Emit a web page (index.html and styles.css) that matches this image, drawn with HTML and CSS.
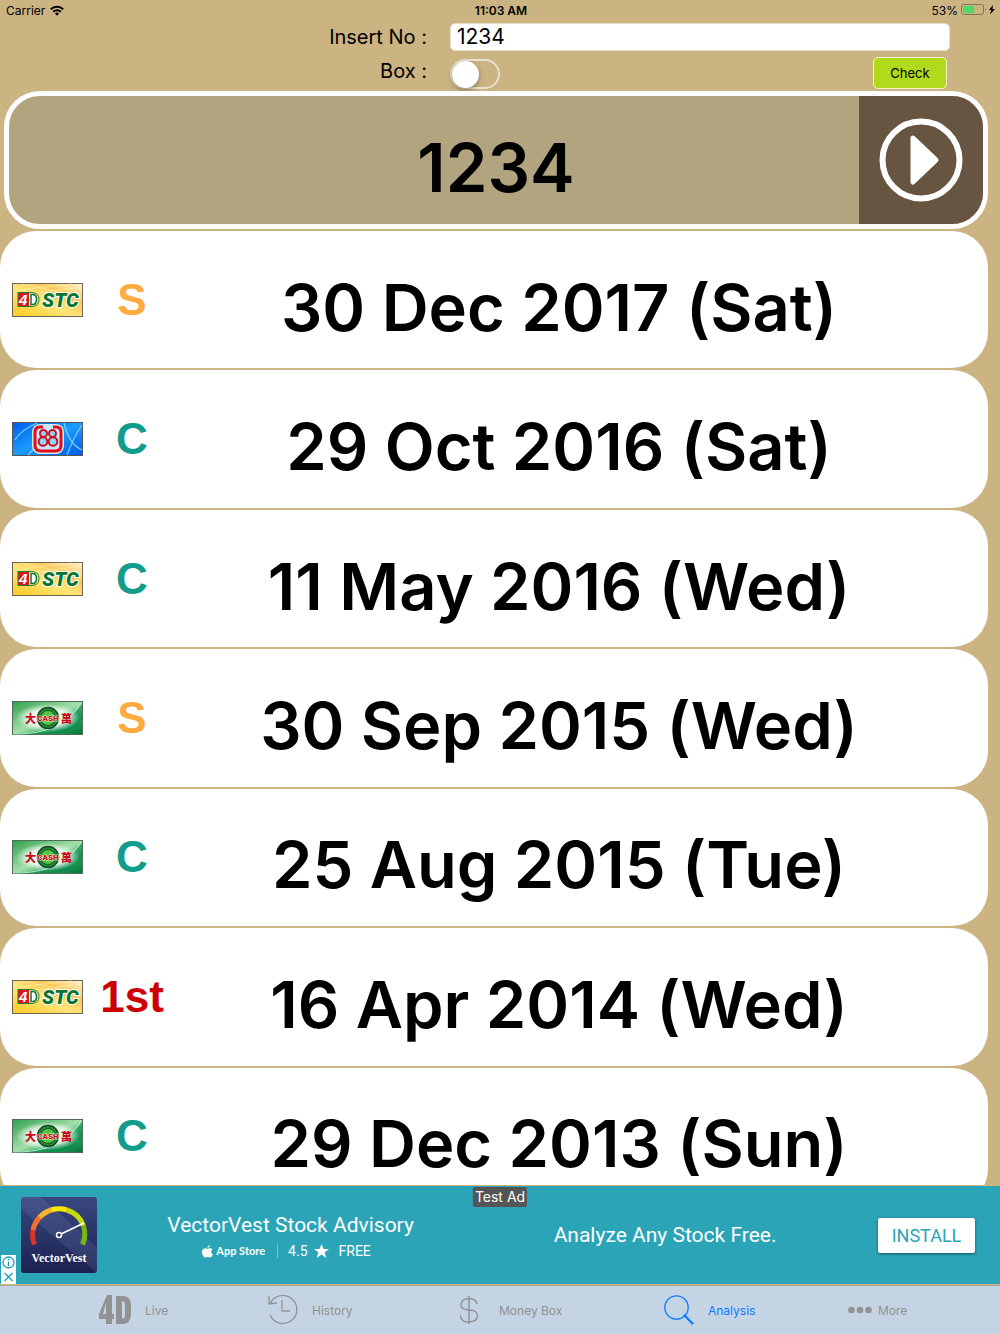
FILE: index.html
```html
<!DOCTYPE html>
<html lang="en">
<head>
<meta charset="utf-8">
<meta name="viewport" content="width=device-width, initial-scale=1">
<title>Analysis</title>
<link rel="stylesheet" href="styles.css">
</head>
<body>
<svg class="defs" aria-hidden="true">
  <defs>
    <linearGradient id="gold" x1="0" y1="1" x2="1" y2="0"><stop offset="0" stop-color="#ffc91f"/><stop offset=".45" stop-color="#ffe577"/><stop offset=".7" stop-color="#fbc95b"/><stop offset="1" stop-color="#fff3d6"/></linearGradient>
    <linearGradient id="blue" x1="0" y1="0" x2="1" y2="1"><stop offset="0" stop-color="#005be6"/><stop offset=".5" stop-color="#1a9cff"/><stop offset="1" stop-color="#0058ea"/></linearGradient>
    <linearGradient id="green" x1="0" y1="0" x2="1" y2="1"><stop offset="0" stop-color="#2fa04a"/><stop offset=".5" stop-color="#a5dfab"/><stop offset=".75" stop-color="#1da058"/><stop offset="1" stop-color="#07733b"/></linearGradient>
    <radialGradient id="glow"><stop offset="0" stop-color="#fff"/><stop offset=".6" stop-color="#fff" stop-opacity=".8"/><stop offset="1" stop-color="#fff" stop-opacity="0"/></radialGradient>
    <linearGradient id="navy" x1="0" y1="0" x2="0" y2="1"><stop offset="0" stop-color="#38477f"/><stop offset="1" stop-color="#1b2150"/></linearGradient>
  </defs>
</svg>

<header class="status">
  <div class="status-left"><span>Carrier</span>
    <svg width="14" height="11" viewBox="0 0 14 11" aria-hidden="true"><g fill="none" stroke="#000" stroke-width="2"><path d="M.8 4.200a8.800 8.800 0 0 1 12.400 0"/><path d="M3.200 6.800a5.400 5.400 0 0 1 7.600 0"/></g><path d="M7 10.700L4.900 8.600a3 3 0 0 1 4.200 0z"/></svg>
  </div>
  <time class="clock">11:03 AM</time>
  <div class="status-right"><span>53%</span>
    <svg width="35" height="12" viewBox="0 0 35 12" aria-hidden="true"><rect x=".5" y=".5" width="22" height="10" rx="2" fill="none" stroke="#84745a"/><rect x="2" y="2" width="11" height="7" fill="#4cd964"/><path d="M24 4v3.500q1.500-1.700 0-3.500" fill="#84745a"/><path d="M32 1l-4 5h2.300L29 10.500 34 5h-2.500z"/></svg>
  </div>
</header>

<form class="search">
  <label for="number">Insert No :</label>
  <input class="number" id="number" type="text" value="1234">
  <label for="box">Box :</label>
  <div class="search-actions">
    <input class="switch" id="box" type="checkbox" role="switch">
    <button class="check" type="button">Check</button>
  </div>
</form>

<main class="results">
  <section class="summary">
    <h1>1234</h1>
    <button class="play" type="button" aria-label="Play"><svg viewBox="0 0 84 84" width="84" height="84"><circle cx="42" cy="42" r="38.500" fill="none" stroke="#fff" stroke-width="6"/><path d="M34 20L57 42 34 64z" fill="#fff" stroke="#fff" stroke-width="5" stroke-linejoin="round"/></svg></button>
  </section>
  <ul class="draws">
    <li class="draw">
      <svg class="logo" viewBox="0 0 71 34" role="img" aria-label="4D STC">
        <g id="stc">
          <rect x=".5" y=".5" width="70" height="33" fill="url(#gold)" stroke="#6b6655"/>
          <path d="M1 8Q30 4 60 1M1 13Q40 8 70 4M10 1L70 14" stroke="#fff3b0" stroke-width=".8" fill="none" opacity=".7"/>
          <path d="M6 10h11v13H6z" fill="#e3131b"/><path d="M6 9.500h13q8 0 8 7t-8 7H6z" fill="none" stroke="#18803a" stroke-width="1"/>
          <path d="M17 10.500h2.500q6 0 6 6t-6 6H17z" fill="#fff"/>
          <path d="M19 11.500h1.500q4 0 4 5t-4 5H19z" fill="none" stroke="#0a7434" stroke-width="1.500"/>
          <text x="7" y="22" font-family="Liberation Sans, sans-serif" font-weight="700" font-style="italic" font-size="15" fill="#fff">4</text>
          <text x="30" y="24" font-family="Roboto, sans-serif" font-weight="900" font-style="italic" font-size="20" fill="#08742f" stroke="#fff" stroke-width="2" paint-order="stroke">STC</text>
        </g>
      </svg>
      <span class="grade special">S</span><span class="date">30 Dec 2017 (Sat)</span>
    </li>
    <li class="draw">
      <svg class="logo" viewBox="0 0 71 34" role="img" aria-label="88">
        <rect x=".5" y=".5" width="70" height="33" fill="url(#blue)" stroke="#555"/>
        <path d="M3 18Q9 8 25 1M52 1Q57 22 70 28M55 33Q62 14 70 3M16 33L34 14" stroke="#9be2ff" stroke-width="1.200" fill="none" opacity=".8"/>
        <rect x="20" y="2" width="32" height="30" rx="8" fill="#dff2ff" opacity=".9"/>
        <path d="M31 5h-3q-5 0-5 5v13q0 6 6 6h14q6 0 6-6V10q0-5-5-5h-3" fill="none" stroke="#e40b12" stroke-width="3"/>
        <g fill="#8ed6ff" stroke="#cf1118" stroke-width="2"><circle cx="31.500" cy="11.500" r="3.500"/><circle cx="31" cy="19.500" r="4.300"/><circle cx="40.500" cy="11.500" r="3.500"/><circle cx="41" cy="19.500" r="4.300"/></g>
      </svg>
      <span class="grade consolation">C</span><span class="date">29 Oct 2016 (Sat)</span>
    </li>
    <li class="draw"><svg class="logo" viewBox="0 0 71 34" role="img" aria-label="4D STC"><use href="#stc"/></svg><span class="grade consolation">C</span><span class="date">11 May 2016 (Wed)</span></li>
    <li class="draw">
      <svg class="logo" viewBox="0 0 71 34" role="img" aria-label="Cash">
        <g id="cash">
          <rect x=".5" y=".5" width="70" height="33" fill="url(#green)" stroke="#526b57"/>
          <path d="M1 33Q50 32 70 3V18Q60 32 40 33z" fill="#07864a" opacity=".6"/><path d="M1 33Q50 34 69 2" fill="none" stroke="#abecc7"/>
          <ellipse cx="36" cy="17" rx="32" ry="14" fill="url(#glow)"/>
          <circle cx="36" cy="17" r="10.500" fill="#218b31" stroke="#174923" stroke-width="1.500"/><circle cx="36" cy="17" r="7.500" fill="#54c44b" stroke="#0d5b20"/>
          <g font-family="Noto Sans CJK TC, sans-serif" font-weight="900" font-size="11" fill="#c9101a"><text x="13" y="22">大</text><text x="49" y="22">萬</text></g>
          <text x="36" y="20" text-anchor="middle" font-family="Roboto, sans-serif" font-weight="900" font-size="8" fill="#c9101a" stroke="#f8e9d0" stroke-width="1" paint-order="stroke">CASH</text>
        </g>
      </svg>
      <span class="grade special">S</span><span class="date">30 Sep 2015 (Wed)</span>
    </li>
    <li class="draw"><svg class="logo" viewBox="0 0 71 34" role="img" aria-label="Cash"><use href="#cash"/></svg><span class="grade consolation">C</span><span class="date">25 Aug 2015 (Tue)</span></li>
    <li class="draw"><svg class="logo" viewBox="0 0 71 34" role="img" aria-label="4D STC"><use href="#stc"/></svg><span class="grade first">1st</span><span class="date">16 Apr 2014 (Wed)</span></li>
    <li class="draw"><svg class="logo" viewBox="0 0 71 34" role="img" aria-label="Cash"><use href="#cash"/></svg><span class="grade consolation">C</span><span class="date">29 Dec 2013 (Sun)</span></li>
  </ul>
</main>

<aside class="ad">
  <svg class="ad-logo" viewBox="0 0 76 76" width="76" height="76" role="img" aria-label="VectorVest">
    <rect width="76" height="76" rx="3" fill="url(#navy)"/><path d="M0 0h20l56 50v26L0 12z" fill="#7886b8" opacity=".2"/>
    <g fill="none" stroke-width="5"><path d="M13.500 47.500A26 26 0 0 1 12 33" stroke="#d6332c"/><path d="M12 33A26 26 0 0 1 18.500 20.500" stroke="#f4702a"/><path d="M18.500 20.500A26 26 0 0 1 30 13" stroke="#fab32c"/><path d="M30 13A26 26 0 0 1 46 13" stroke="#ffe600"/><path d="M46 13A26 26 0 0 1 62.500 29" stroke="#c4dc0d"/><path d="M62.500 29A26 26 0 0 1 61.500 47.500" stroke="#76b80c"/></g>
    <path d="M38 38L63 26" stroke="#fff" stroke-width="1.500"/><circle cx="38" cy="38" r="2.500" fill="#27305f" stroke="#fff" stroke-width="1.500"/>
    <text x="38" y="65" text-anchor="middle" font-family="Liberation Serif, serif" font-weight="700" font-size="12" fill="#fff">VectorVest</text>
  </svg>
  <div class="ad-copy">
    <p class="ad-title">VectorVest Stock Advisory</p>
    <p class="ad-meta">
      <svg width="11" height="13" viewBox="0 0 11 13" aria-hidden="true"><path fill="#fff" d="M7.700 0Q7.900 2.500 5.400 3 5.300.8 7.700 0M5.500 4C6.300 4 7 3.300 8.200 3.300q1.500.1 2.300 1.200c-2 1.200-1.700 3.900.5 4.600C10.300 11 9.200 12.600 8 12.600c-.9 0-1.300-.5-2.300-.5s-1.400.5-2.300.5C1.800 12.600 0 9.800 0 7.300c0-2.600 1.600-4 3.200-4C4.200 3.300 4.900 4 5.500 4"/></svg>
      <span class="store">App Store</span><span class="rating">4.5</span>
      <svg width="15" height="14" viewBox="0 0 15 14" aria-hidden="true"><path fill="#fff" d="M7.500 0l2 5H15l-4.300 3.300L12.300 14 7.500 10.600 2.700 14l1.600-5.700L0 5h5.500z"/></svg>
      <span class="price">FREE</span>
    </p>
  </div>
  <p class="ad-tagline">Analyze Any Stock Free.</p>
  <button class="install" type="button">INSTALL</button>
  <span class="test-badge">Test Ad</span>
  <svg class="ad-choices" width="15" height="29" viewBox="0 0 15 29" role="img" aria-label="Ad options"><path fill="#fff" d="M0 0h15v29H0z"/><g fill="none" stroke="#16a0bb" stroke-width="1.300"><circle cx="7.500" cy="7.500" r="5.500"/><path d="M7.500 6.500v4.500M7.500 4v1.300M3.500 18l8 8M11.500 18l-8 8"/></g></svg>
</aside>

<nav class="tabs">
  <a href="#live"><svg width="32" height="30" viewBox="0 0 32 30" aria-hidden="true"><path fill="#929292" fill-rule="evenodd" d="M8 0h5v19h2v5h-2v5H7v-5H0v-5zM7 8L4 19h3zM17 1h6q9 0 9 9v9q0 10-9 10h-6zm6 5v18q3 0 3-4V10q0-4-3-4"/></svg>Live</a>
  <a href="#history"><svg width="30" height="30" viewBox="0 0 30 30" fill="none" stroke="#929292" stroke-width="1.300" aria-hidden="true"><path d="M2 9A14 14 0 1 1 2 20M1 1v8l8-1M14 5v11h8"/></svg>History</a>
  <a href="#money"><svg width="26" height="30" viewBox="0 0 26 30" fill="none" stroke="#929292" stroke-width="1.500" aria-hidden="true"><path d="M10 1v28M18 9Q17 3.500 10 3.500T2 9t8 6 8.500 6-8.500 6-8.500-6.500"/></svg>Money Box</a>
  <a class="current" href="#analysis" aria-current="page"><svg width="30" height="30" viewBox="0 0 30 30" fill="none" stroke="#087cff" aria-hidden="true"><circle cx="12.500" cy="12.500" r="11.700" stroke-width="1.300"/><path d="M20.500 20.500l8 8" stroke-width="2.300" stroke-linecap="round"/></svg>Analysis</a>
  <a class="more" href="#more"><svg width="24" height="8" viewBox="0 0 24 8" fill="#929292" aria-hidden="true"><circle cx="3.500" cy="4" r="3.300"/><circle cx="12" cy="4" r="3.300"/><circle cx="20.500" cy="4" r="3.300"/></svg>More</a>
</nav>
</body>
</html>
```
FILE: styles.css
```css
* { box-sizing: border-box; }

body {
  margin: 0;
  height: 100vh;
  display: flex;
  flex-direction: column;
  background: #cbb382;
  color: #000;
  font-family: Inter, "Liberation Sans", sans-serif;
}

p, h1, ul { margin: 0; padding: 0; }
button, input { font: inherit; margin: 0; }
svg { display: block; flex: none; }
.defs { position: absolute; width: 0; height: 0; }

/* Status bar */
.status {
  display: grid;
  grid-template-columns: 1fr auto 1fr;
  align-items: center;
  height: 20px;
  padding: 0 4px 0 6px;
  font-size: 12px;
}
.status-left, .status-right { display: flex; align-items: center; gap: 5px; }
.status-right { justify-content: flex-end; gap: 3px; }
.clock { font-weight: 600; }

/* Number form */
.search {
  display: grid;
  grid-template-columns: 43% 50%;
  column-gap: 20px;
  row-gap: 6px;
  padding: 3px 0 2px;
  font-size: 20px;
  line-height: 28px;
}
.search label { text-align: right; padding-right: 3px; }
.number {
  width: 100%;
  height: 28px;
  padding: 0 6px;
  border: 1px solid #e4dccb;
  border-radius: 5px;
  background: #fff;
  font-size: 21px;
}
.search-actions {
  display: flex;
  justify-content: space-between;
  align-items: flex-end;
  padding-right: 3px;
}
.switch {
  appearance: none;
  width: 50px;
  height: 30px;
  border: 2px solid #e8e0d0;
  border-radius: 15px;
}
.switch::before {
  content: "";
  display: block;
  width: 27px;
  height: 27px;
  border-radius: 50%;
  background: #fff;
  box-shadow: 0 2px 5px rgba(0, 0, 0, .35);
}
.check {
  width: 74px;
  height: 32px;
  padding: 0;
  border: 1px solid #f3f5cf;
  border-radius: 5px;
  background: #b0da1b;
  font-size: 13px;
  color: #000;
}

/* Results */
.results {
  flex: 1;
  min-height: 0;
  overflow: hidden;
  padding-right: 12px;
}
.summary {
  display: grid;
  grid-template-columns: 1fr 124px;
  height: 138px;
  margin: 0 0 2px 4px;
  border: 5px solid #fff;
  border-radius: 36px;
  overflow: hidden;
  background: #b1a47e;
}
.summary h1 {
  grid-area: 1 / 1 / 2 / 3;
  padding-top: 16px;
  align-self: center;
  text-align: center;
  font-size: 67px;
  line-height: 80px;
  font-weight: 600;
}
.play {
  grid-area: 1 / 2;
  display: flex;
  align-items: center;
  justify-content: center;
  padding: 0;
  border: 0;
  background: #685541;
}
.draws {
  display: grid;
  grid-template-rows: repeat(7, 1fr);
  gap: 2px;
  min-height: 974px;
  list-style: none;
}
.draw {
  display: grid;
  grid-template-columns: 83px 98px 1fr;
  align-items: center;
  border-radius: 36px;
  background: #fff;
}
.logo { width: 71px; height: 34px; margin-left: 12px; }
.grade {
  justify-self: center;
  font: 700 44px/52px "Liberation Sans", sans-serif;
}
.special { color: #ffab3f; }
.consolation { color: #129c8b; }
.first { color: #cd0000; }
.date {
  padding: 16px 51px 0 0;
  text-align: center;
  white-space: nowrap;
  font-size: 65px;
  line-height: 80px;
  font-weight: 600;
}

/* Ad banner */
.ad {
  position: relative;
  display: grid;
  grid-template-columns: 76px 16fr 15fr 97px;
  align-items: center;
  height: 100px;
  padding: 0 25px 0 21px;
  border: solid #cbb382;
  border-width: 1px 0;
  background: #2aa4b6;
  color: #fff;
  font-family: Roboto, sans-serif;
  text-align: center;
}
.ad-copy { padding: 4px 16px 0 0; }
.ad-title, .ad-tagline { font-size: 21px; line-height: 28px; }
.ad-tagline { padding-right: 48px; white-space: nowrap; }
.ad-meta {
  display: flex;
  align-items: center;
  justify-content: center;
  gap: 3px;
  padding-right: 8px;
  font-size: 14px;
  line-height: 24px;
}
.store { font: 700 11px/14px Lato, sans-serif; padding-right: 9px; }
.rating { border-left: 1px solid #75bfc9; padding: 0 3px 0 10px; line-height: 14px; }
.price { padding-left: 7px; }
.install {
  height: 35px;
  padding: 0;
  border: 0;
  border-radius: 2px;
  background: #fff;
  box-shadow: 0 1px 3px rgba(0, 0, 0, .5);
  color: #2aa4b6;
  font-size: 18px;
}
.test-badge {
  position: absolute;
  top: 1px;
  left: 50%;
  transform: translateX(-50%);
  padding: 0 2px;
  border-radius: 2px;
  background: #555;
  font: 14px/20px Inter, sans-serif;
  white-space: nowrap;
}
.ad-choices { position: absolute; left: 1px; bottom: 0; }

/* Tab bar */
.tabs {
  display: grid;
  grid-template-columns: 169fr 191fr 205fr 184fr 152fr;
  align-items: center;
  height: 49px;
  padding-left: 99px;
  border-top: 1px solid #aaa59a;
  background: #c5d4e4;
  font-size: 12px;
}
.tabs a {
  display: flex;
  align-items: center;
  gap: 14px;
  color: #929292;
  text-decoration: none;
  white-space: nowrap;
}
.tabs .current { color: #087cff; }
.tabs .more { gap: 6px; }
```
